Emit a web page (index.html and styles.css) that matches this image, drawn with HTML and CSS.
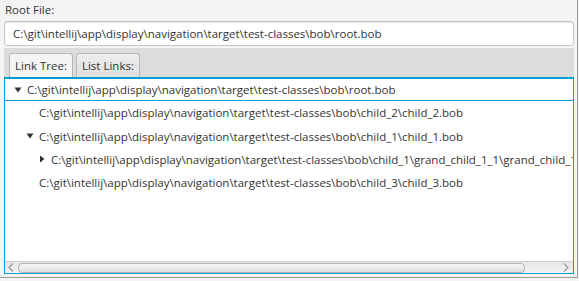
FILE: index.html
```html
<!DOCTYPE html>
<html lang="en">
<head>
    <meta charset="UTF-8">
    <title>Links</title>
    <link rel="stylesheet" href="styles.css">
</head>
<body>
    <div class="window">
        <div class="root-label">Root File:</div>
        <div class="path-input">C:\git\intellij\app\display\navigation\target\test-classes\bob\root.bob</div>

        <div class="tab-pane">
            <div class="tab-header">
                <div class="tab selected">Link Tree:</div>
                <div class="tab">List Links:</div>
            </div>
            <div class="tree">
                <div class="rows">
                    <div class="row focused depth-0">
                        <svg class="arrow" width="12" height="8" viewBox="0 0 12 8"><path d="M2.5 1.5 L9.5 1.5 L6 6.5 Z" fill="#333"/></svg>
                        <span>C:\git\intellij\app\display\navigation\target\test-classes\bob\root.bob</span>
                    </div>
                    <div class="row depth-1 leaf">
                        <span>C:\git\intellij\app\display\navigation\target\test-classes\bob\child_2\child_2.bob</span>
                    </div>
                    <div class="row depth-1">
                        <svg class="arrow" width="12" height="8" viewBox="0 0 12 8"><path d="M2.5 1.5 L9.5 1.5 L6 6.5 Z" fill="#333"/></svg>
                        <span>C:\git\intellij\app\display\navigation\target\test-classes\bob\child_1\child_1.bob</span>
                    </div>
                    <div class="row depth-2">
                        <svg class="arrow" width="12" height="8" viewBox="0 0 12 8"><path d="M4 0.5 L8.5 4 L4 7.5 Z" fill="#333"/></svg>
                        <span>C:\git\intellij\app\display\navigation\target\test-classes\bob\child_1\grand_child_1_1\grand_child_1_1.bob</span>
                    </div>
                    <div class="row depth-1 leaf">
                        <span>C:\git\intellij\app\display\navigation\target\test-classes\bob\child_3\child_3.bob</span>
                    </div>
                </div>
                <div class="hscroll">
                    <svg class="scroll-arrow" width="6" height="9" viewBox="0 0 6 9"><path d="M5 0.5 L1 4.5 L5 8.5" fill="none" stroke="#9a9a9a" stroke-width="1.2"/></svg>
                    <div class="thumb"></div>
                    <svg class="scroll-arrow" width="6" height="9" viewBox="0 0 6 9"><path d="M1 0.5 L5 4.5 L1 8.5" fill="none" stroke="#9a9a9a" stroke-width="1.2"/></svg>
                </div>
            </div>
        </div>
    </div>
</body>
</html>
```

FILE: styles.css
```css
body {
    margin: 0;
    padding: 0;
    width: 579px;
    height: 281px;
    overflow: hidden;
    background: #f4f4f4;
    font-family: "Open Sans", "Noto Sans", sans-serif;
    font-size: 11.5px;
    color: #333;
}
.window {
    width: 577px;
    height: 277px;
    border-right: 1px solid #9c9c9c;
    border-bottom: 1px solid #9c9c9c;
}
.root-label {
    height: 20px;
    line-height: 20px;
    padding-left: 5px;
}
.path-input {
    margin: 1px 3px 0 4px;
    height: 23px;
    line-height: 23px;
    padding-left: 8px;
    background: #fff;
    border: 1px solid #c6c6c6;
    border-radius: 3px;
    box-shadow: inset 0 1px 1px #e4e4e4;
    white-space: nowrap;
    overflow: hidden;
}
.tab-pane {
    margin: 2px 3px 0 4px;
}
.tab-header {
    height: 29px;
    background: #dcdcdc;
    display: flex;
    align-items: flex-end;
    gap: 3px;
    padding-left: 5px;
}
.tab {
    height: 23px;
    line-height: 23px;
    padding: 0 5px;
    border: 1px solid #b8b8b8;
    border-bottom: none;
    border-radius: 3px 3px 0 0;
    background: linear-gradient(#ededed, #e0e0e0);
}
.tab.selected {
    background: #f4f4f4;
}
.tree {
    height: 195px;
    border: 1px solid #039ed3;
    background: #fff;
    display: flex;
    flex-direction: column;
}
.rows {
    flex: 1;
    overflow: hidden;
}
.row {
    height: 23.25px;
    display: flex;
    align-items: center;
    white-space: nowrap;
    box-sizing: border-box;
}
.row.focused {
    border: 1px solid #039ed3;
    border-left: none;
    border-right: none;
}
.row .arrow {
    flex: none;
    margin-right: 3px;
}
.depth-0 { padding-left: 7px; }
.depth-1 { padding-left: 19px; }
.depth-2 { padding-left: 31px; }
.depth-1.leaf { padding-left: 34px; }
.hscroll {
    height: 11px;
    display: flex;
    align-items: center;
    padding: 0 4px 0 3px;
    background: linear-gradient(#e6e6e6, #f2f2f2);
    border-top: 1px solid #d0d0d0;
}
.thumb {
    flex: 1;
    height: 8px;
    margin: 0 38px 0 4px;
    border: 1px solid #b4b4b4;
    border-radius: 4px;
    background: linear-gradient(#f6f6f6, #dedede);
}
```
